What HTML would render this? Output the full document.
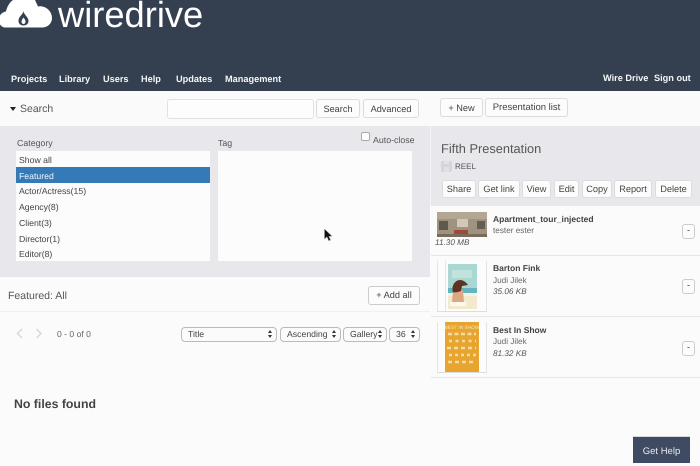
<!DOCTYPE html>
<html><head><meta charset="utf-8">
<style>
*{box-sizing:border-box}
html,body{margin:0;padding:0}
body{width:700px;height:463px;position:relative;overflow:hidden;background:#fbfbfb;font-family:"Liberation Sans",sans-serif;color:#444;font-size:9px;text-rendering:geometricPrecision}
.a{position:absolute}
.t{position:absolute;white-space:nowrap;line-height:14px}
.n{color:#f4f5f6;font-weight:bold;font-size:9.2px;top:71px}
.b{position:absolute;background:#fcfcfc;border:1px solid #dcdcdc;border-radius:3px;text-align:center;white-space:nowrap;color:#444;font-size:9.2px}
.r{position:absolute;white-space:nowrap;line-height:14px;font-size:8.7px;color:#444}
.s{position:absolute;top:327px;height:15px;border:1px solid #bbb;border-radius:4px;background:#fbfbfb;line-height:13px;font-size:8.7px;color:#444;padding-left:6px;white-space:nowrap}
.s:after{content:"";position:absolute;right:4px;top:2px;width:0;height:0;border:2.5px solid transparent;border-bottom:3px solid #333;border-top:0}
.s:before{content:"";position:absolute;right:4px;top:7px;width:0;height:0;border:2.5px solid transparent;border-top:3px solid #333;border-bottom:0}
.h{font-weight:bold;color:#444;font-size:8.5px}
.g{color:#666;font-size:8.2px}
.i{color:#555;font-style:italic;font-size:8.2px}
.m{position:absolute;left:682px;width:13px;height:15px;background:#fcfcfc;border:1px solid #ccc;border-radius:3px;text-align:center;line-height:11px;font-size:9px;color:#333}
</style></head><body>
<div class="a" style="left:0;top:0;width:700px;height:91px;background:#343f50"></div>
<svg class="a" style="left:0;top:0" width="54" height="29" viewBox="0 0 54 29">
<path fill="#fff" d="M5 27.500C1 27.500 -2 23 -1 18C0 14 3 12 6 11.500C7 7 9 3 13 0L35 0L38 6.500C44 5 52 10 52 18C52 24 47 27.500 42 27.500Z"/>
<path fill="#343f50" d="M23.500 11C24 15 28.500 17 28.500 21C28.500 24 26 25.500 23.500 25.500C21 25.500 18.500 24 18.500 21C18.500 16 23 15 23.500 11Z"/>
<path fill="#fff" d="M23.500 17.500C24.500 19 25.500 20 25.500 21.500C25.500 23 24.500 24 23.500 24C22.500 24 21.500 23 21.500 21.500C21.500 20 22.500 19 23.500 17.500Z"/>
</svg>
<div class="a" style="left:58px;top:-7px;font-size:36.300px;line-height:44px;color:#fff;white-space:nowrap">wiredrive</div>
<div class="t n" style="left:11px;top:72px">Projects</div>
<div class="t n" style="left:59px;top:72px">Library</div>
<div class="t n" style="left:103px;top:72px">Users</div>
<div class="t n" style="left:141px;top:72px">Help</div>
<div class="t n" style="left:176px;top:72px">Updates</div>
<div class="t n" style="left:225px;top:72px">Management</div>
<div class="t n" style="left:603px;top:71px">Wire Drive</div>
<div class="t n" style="left:654px;top:71px">Sign out</div>

<div class="a" style="left:0;top:91px;width:700px;height:35px;background:#fafafa"></div>
<div class="a" style="left:10px;top:107px;width:0;height:0;border:3px solid transparent;border-top:4px solid #222;border-bottom:0"></div>
<div class="t" style="left:20px;top:102px;font-size:10.500px;color:#555">Search</div>
<div class="a" style="left:167px;top:99px;width:147px;height:20px;background:#fdfdfd;border:1px solid #e2e2e2;border-radius:3px"></div>
<div class="b" style="left:316px;top:99px;width:44px;height:19px;line-height:18px">Search</div>
<div class="b" style="left:363px;top:99px;width:56px;height:19px;line-height:18px">Advanced</div>
<div class="b" style="left:440px;top:98px;width:43px;height:19px;line-height:18px">+ New</div>
<div class="b" style="left:485px;top:98px;width:83px;height:19px;line-height:18px;font-size:9.5px">Presentation list</div>

<div class="a" style="left:0;top:126px;width:430px;height:151px;background:#e8e8ec"></div>
<div class="a" style="left:431px;top:126px;width:269px;height:80px;background:#e8e8ec"></div>
<div class="t" style="left:17px;top:136px;color:#555;font-size:8.8px">Category</div>
<div class="t" style="left:218px;top:136px;color:#555;font-size:8.8px">Tag</div>
<div class="a" style="left:361px;top:132px;width:9px;height:9px;background:#fcfcfc;border:1px solid #aaa;border-radius:2px"></div>
<div class="t" style="left:373px;top:133px;color:#555;font-size:8.8px">Auto-close</div>
<div class="a" style="left:16px;top:151px;width:194px;height:110px;background:#fcfcfc;overflow:hidden">
<div class="r" style="left:3px;top:2px">Show all</div>
<div class="a" style="left:0;top:16px;width:194px;height:16px;background:#337ab7"></div>
<div class="r" style="left:3px;top:18px;color:#f4f7fa">Featured</div>
<div class="r" style="left:3px;top:33px">Actor/Actress(15)</div>
<div class="r" style="left:3px;top:49px">Agency(8)</div>
<div class="r" style="left:3px;top:65px">Client(3)</div>
<div class="r" style="left:3px;top:81px">Director(1)</div>
<div class="r" style="left:3px;top:96px">Editor(8)</div>
</div>
<div class="a" style="left:218px;top:151px;width:194px;height:110px;background:#fcfcfc"></div>
<svg class="a" style="left:323px;top:228px" width="10" height="14" viewBox="0 0 10 14"><path fill="#111" stroke="#999" stroke-width=".5" d="M1.500 1V11L4 8.800L5.800 12.800L7.500 12L5.800 8.200H9Z"/></svg>

<div class="t" style="left:8px;top:289px;font-size:10.500px;color:#555">Featured: All</div>
<div class="b" style="left:368px;top:286px;width:52px;height:19px;line-height:17px;border-color:#ccc">+ Add all</div>
<div class="a" style="left:0;top:311px;width:430px;height:1px;background:#f0f0f0"></div>

<svg class="a" style="left:15px;top:327px" width="30" height="13" viewBox="0 0 30 13"><path fill="none" stroke="#d8d8d8" stroke-width="1.500" d="M7 2L2.500 6.500L7 11M21.500 2L26 6.500L21.500 11"/></svg>
<div class="t" style="left:57px;top:327px;font-size:8.6px;color:#666">0 - 0 of 0</div>
<div class="s" style="left:181px;width:96px">Title</div>
<div class="s" style="left:280px;width:61px">Ascending</div>
<div class="s" style="left:343px;width:44px">Gallery</div>
<div class="s" style="left:389px;width:31px">36</div>
<div class="t" style="left:14px;top:397px;font-size:12.300px;font-weight:bold;color:#444">No files found</div>

<div class="a" style="left:430px;top:126px;width:1px;height:80px;background:#f4f4f6"></div>
<div class="t" style="left:441px;top:141px;font-size:12.800px;color:#555;line-height:16px">Fifth Presentation</div>
<div class="a" style="left:441px;top:161px;width:11px;height:11px;background:#d6d6da;border-radius:2px"></div>
<div class="a" style="left:444px;top:161px;width:5px;height:3px;background:#e2e2e6"></div>
<div class="a" style="left:444px;top:167px;width:5px;height:5px;background:#e2e2e6"></div>
<div class="t" style="left:455px;top:160px;font-size:8px;color:#555">REEL</div>
<div class="b" style="left:442px;top:180px;width:34px;height:18px;line-height:17px">Share</div>
<div class="b" style="left:478px;top:180px;width:42px;height:18px;line-height:17px">Get link</div>
<div class="b" style="left:522px;top:180px;width:29px;height:18px;line-height:17px">View</div>
<div class="b" style="left:554px;top:180px;width:25px;height:18px;line-height:17px">Edit</div>
<div class="b" style="left:582px;top:180px;width:30px;height:18px;line-height:17px">Copy</div>
<div class="b" style="left:614px;top:180px;width:38px;height:18px;line-height:17px">Report</div>
<div class="b" style="left:655px;top:180px;width:37px;height:18px;line-height:17px">Delete</div>

<!-- row 1 -->
<svg class="a" style="left:437px;top:212px" width="50" height="25" viewBox="0 0 50 25">
<rect width="50" height="25" fill="#9f927f"/>
<rect width="50" height="7" fill="#b3a692"/>
<rect x="2" y="9" width="9" height="9" fill="#5e584e"/>
<rect x="40" y="9" width="8" height="8" fill="#645d52"/>
<rect x="20" y="7" width="11" height="8" fill="#cfc9ba"/>
<rect x="17" y="18" width="14" height="4" fill="#a0483e"/>
<rect y="22" width="50" height="3" fill="#7a6c5a"/>
</svg>
<div class="t h" style="left:493px;top:212px">Apartment_tour_injected</div>
<div class="t g" style="left:493px;top:224px">tester ester</div>
<div class="t i" style="left:435px;top:236px">11.30 MB</div>
<div class="m" style="top:224px">-</div>
<div class="a" style="left:431px;top:255px;width:269px;height:1px;background:#e6e6e6"></div>

<!-- row 2 -->
<div class="a" style="left:437px;top:261px;width:50px;height:51px;background:#fcfcfc;border-left:1px solid #e4e4e4;border-right:1px solid #e4e4e4;border-bottom:1px solid #ddd"></div>
<div class="a" style="left:445px;top:261px;width:1px;height:50px;background:#e4e4e4"></div>
<svg class="a" style="left:448px;top:264px" width="29" height="45" viewBox="0 0 29 45">
<rect width="29" height="45" fill="#f3e9cc"/>
<rect width="29" height="25" fill="#a9d7d3"/>
<rect y="24" width="29" height="5" fill="#63b6c0"/>
<rect y="29" width="29" height="3" fill="#f6f1e2"/>
<rect x="4" y="6" width="20" height="8" fill="#c2e2dc"/>
<path fill="#dda882" d="M5 27C8 24 13 24 15 27L16 38C12 41 6 40 4 38Z"/>
<path fill="#5f3320" d="M5 28C3 22 7 16 12 16C15 16 18 18 20 21L14 22L13 27C10 28 7 29 5 28Z"/>
<rect x="2" y="38" width="16" height="4" fill="#fbf8ee"/>
</svg>
<div class="t h" style="left:493px;top:261px">Barton Fink</div>
<div class="t g" style="left:493px;top:274px">Judi Jilek</div>
<div class="t i" style="left:493px;top:285px">35.06 KB</div>
<div class="m" style="top:279px">-</div>
<div class="a" style="left:431px;top:316px;width:269px;height:1px;background:#e6e6e6"></div>

<!-- row 3 -->
<div class="a" style="left:437px;top:322px;width:50px;height:51px;background:#fcfcfc;border-left:1px solid #e4e4e4;border-right:1px solid #e4e4e4;border-bottom:1px solid #ddd"></div>
<svg class="a" style="left:445px;top:322px" width="34" height="50" viewBox="0 0 34 50">
<rect width="34" height="50" fill="#e8a52e"/>
<text x="17" y="7" font-size="4.800" font-family="Liberation Sans" fill="#f6e6c0" text-anchor="middle">BEST IN SHOW</text>
<g fill="none" stroke="#f3dcaa" stroke-width="2.500">
<path stroke-dasharray="4 2.500" d="M3 12H31"/><path stroke-dasharray="3 3.500" d="M4 19H31"/><path stroke-dasharray="4 3" d="M2 26H31"/><path stroke-dasharray="3 3" d="M4 33H31"/><path stroke-dasharray="4 3" d="M3 40H31"/>
</g>
</svg>
<div class="t h" style="left:493px;top:323px">Best In Show</div>
<div class="t g" style="left:493px;top:335px">Judi Jilek</div>
<div class="t i" style="left:493px;top:347px">81.32 KB</div>
<div class="m" style="top:341px">-</div>
<div class="a" style="left:431px;top:377px;width:269px;height:1px;background:#e6e6e6"></div>

<div class="a" style="left:633px;top:436px;width:57px;height:27px;background:#3f4b63;border-top:1px solid #d8d8dc;color:#e8eaee;font-size:9.500px;text-align:center;line-height:29px">Get Help</div>
</body></html>
